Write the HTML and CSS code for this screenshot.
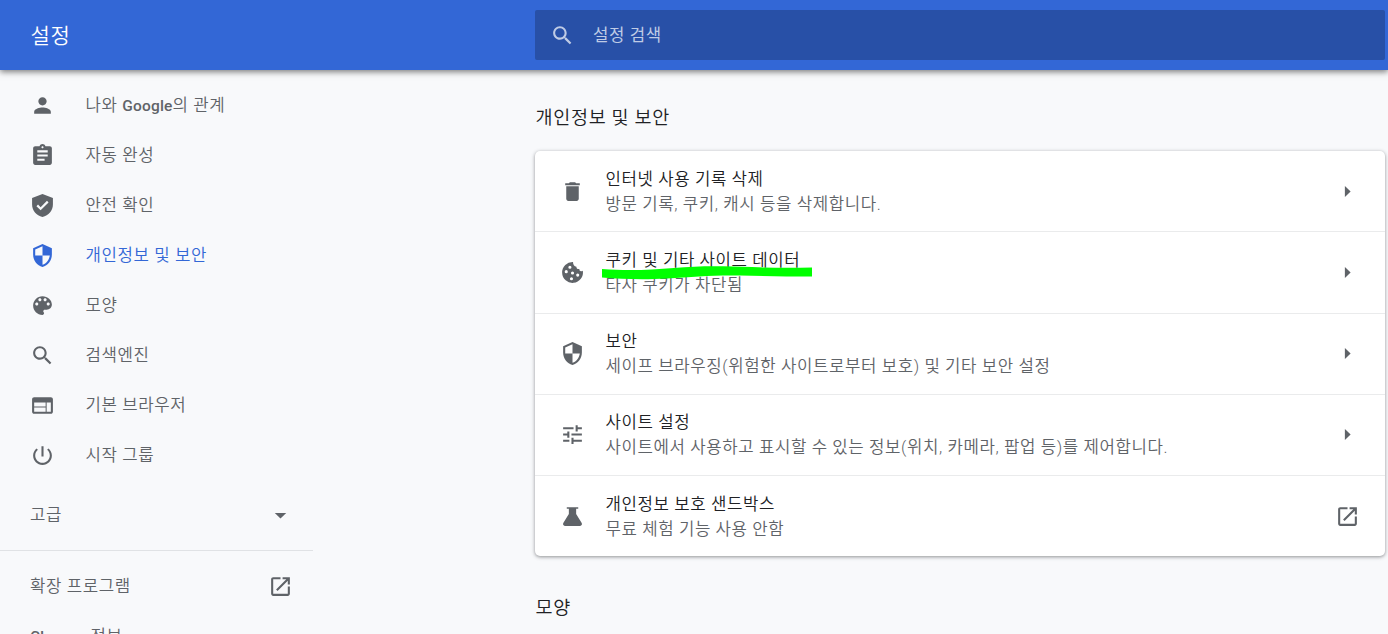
FILE: index.html
```html
<!DOCTYPE html>
<html lang="ko">
<head>
    <meta charset="utf-8">
    <meta name="viewport" content="width=device-width, initial-scale=1">
    <title>설정 - 개인정보 및 보안</title>
    <link rel="stylesheet" href="styles.css">
</head>
<body>
    <header class="toolbar">
        <h1 class="toolbar-title">설정</h1>
        <div class="search">
            <svg class="icon" viewBox="0 0 24 24"><path d="M15.5 14h-.79l-.28-.27C15.41 12.59 16 11.11 16 9.5 16 5.91 13.09 3 9.5 3S3 5.91 3 9.5 5.91 16 9.5 16c1.61 0 3.09-.59 4.23-1.57l.27.28v.79l5 4.99L20.49 19l-4.99-5zm-6 0C7.01 14 5 11.99 5 9.5S7.01 5 9.5 5 14 7.01 14 9.5 11.99 14 9.5 14z"/></svg>
            <span>설정 검색</span>
        </div>
    </header>

    <div class="container">
        <nav class="sidebar">
            <a class="menu-item">
                <svg class="icon" viewBox="0 0 24 24"><path d="M12 12c2.21 0 4-1.79 4-4s-1.79-4-4-4-4 1.79-4 4 1.79 4 4 4zm0 2c-2.67 0-8 1.34-8 4v2h16v-2c0-2.66-5.33-4-8-4z"/></svg>
                <span>나와 <b>Google</b>의 관계</span>
            </a>
            <a class="menu-item">
                <svg class="icon" viewBox="0 0 24 24"><path d="M19 3h-4.18C14.4 1.84 13.3 1 12 1c-1.3 0-2.4.84-2.82 2H5c-1.1 0-2 .9-2 2v14c0 1.1.9 2 2 2h14c1.1 0 2-.9 2-2V5c0-1.1-.9-2-2-2zm-7 0c.55 0 1 .45 1 1s-.45 1-1 1-1-.45-1-1 .45-1 1-1zm2 14H7v-2h7v2zm3-4H7v-2h10v2zm0-4H7V7h10v2z"/></svg>
                <span>자동 완성</span>
            </a>
            <a class="menu-item">
                <svg class="icon" viewBox="0 0 24 24"><path d="M12 1L2 4.8V11c0 5.55 4.1 10.74 10 12 5.9-1.26 10-6.45 10-12V4.8L12 1zm-1.8 15.6l-4-4 1.5-1.5 2.5 2.5 6.1-6.1 1.5 1.5-7.6 7.6z"/></svg>
                <span>안전 확인</span>
            </a>
            <a class="menu-item selected">
                <svg class="icon" viewBox="0 0 24 24"><path d="M12 1L3 5v6c0 5.55 3.84 10.74 9 12 5.16-1.26 9-6.45 9-12V5l-9-4zm0 10.99h7c-.53 4.12-3.28 7.79-7 8.94V12H5V6.3l7-3.11v8.8z"/></svg>
                <span>개인정보 및 보안</span>
            </a>
            <a class="menu-item">
                <svg class="icon" viewBox="0 0 24 24"><path d="M12 3c-4.97 0-9 4.03-9 9s4.03 9 9 9c.83 0 1.5-.67 1.5-1.5 0-.39-.15-.74-.39-1.01-.23-.26-.38-.61-.38-.99 0-.83.67-1.5 1.5-1.5H16c2.76 0 5-2.24 5-5 0-4.42-4.03-8-9-8zm-5.5 9c-.83 0-1.5-.67-1.5-1.5S5.67 9 6.5 9 8 9.67 8 10.5 7.33 12 6.5 12zm3-4C8.67 8 8 7.33 8 6.5S8.67 5 9.5 5s1.5.67 1.5 1.5S10.33 8 9.5 8zm5 0c-.83 0-1.5-.67-1.5-1.5S13.67 5 14.5 5s1.5.67 1.5 1.5S15.33 8 14.5 8zm3 4c-.83 0-1.5-.67-1.5-1.5S16.67 9 17.5 9s1.5.67 1.5 1.5-.67 1.5-1.5 1.5z"/></svg>
                <span>모양</span>
            </a>
            <a class="menu-item">
                <svg class="icon" viewBox="0 0 24 24"><path d="M15.5 14h-.79l-.28-.27C15.41 12.59 16 11.11 16 9.5 16 5.91 13.09 3 9.5 3S3 5.91 3 9.5 5.91 16 9.5 16c1.61 0 3.09-.59 4.23-1.57l.27.28v.79l5 4.99L20.49 19l-4.99-5zm-6 0C7.01 14 5 11.99 5 9.5S7.01 5 9.5 5 14 7.01 14 9.5 11.99 14 9.5 14z"/></svg>
                <span>검색엔진</span>
            </a>
            <a class="menu-item">
                <svg class="icon" viewBox="0 0 24 24"><path d="M20 4H4c-1.1 0-2 .9-2 2v12c0 1.1.9 2 2 2h16c1.1 0 2-.9 2-2V6c0-1.1-.9-2-2-2zm-5 14H4v-4h11v4zm0-5H4V9h11v4zm5 5h-4V9h4v9z"/></svg>
                <span>기본 브라우저</span>
            </a>
            <a class="menu-item">
                <svg class="icon" viewBox="0 0 24 24"><path d="M13 3h-2v10h2V3zm4.83 2.17l-1.42 1.42C17.99 7.86 19 9.81 19 12c0 3.87-3.13 7-7 7s-7-3.13-7-7c0-2.19 1.01-4.14 2.58-5.42L6.17 5.17C4.23 6.82 3 9.26 3 12c0 4.97 4.03 9 9 9s9-4.03 9-9c0-2.74-1.23-5.18-3.17-6.83z"/></svg>
                <span>시작 그룹</span>
            </a>

            <div class="advanced">
                <span>고급</span>
                <svg class="icon" viewBox="0 0 24 24"><path d="M6.5 9.5l5.5 5.5 5.5-5.5z"/></svg>
            </div>

            <div class="menu-footer">
                <a class="menu-link">
                    <span>확장 프로그램</span>
                    <svg class="icon" viewBox="0 0 24 24"><path d="M19 19H5V5h7V3H5c-1.11 0-2 .9-2 2v14c0 1.1.89 2 2 2h14c1.1 0 2-.9 2-2v-7h-2v7zM14 3v2h3.59l-9.83 9.83 1.41 1.41L19 6.41V10h2V3h-7z"/></svg>
                </a>
                <a class="menu-link"><span><b>Chrome</b> 정보</span></a>
            </div>
        </nav>

        <main class="main">
            <h2>개인정보 및 보안</h2>
            <section class="card">
                <div class="row">
                    <svg class="icon" viewBox="0 0 24 24"><path d="M6 19c0 1.1.9 2 2 2h8c1.1 0 2-.9 2-2V7H6v12zM19 4h-3.5l-1-1h-5l-1 1H5v2h14V4z"/></svg>
                    <div class="row-text">
                        <div class="label">인터넷 사용 기록 삭제</div>
                        <div class="sub-label">방문 기록, 쿠키, 캐시 등을 삭제합니다.</div>
                    </div>
                    <svg class="icon" viewBox="0 0 24 24"><path d="M9.5 17.3l5.5-5.3-5.5-5.3z"/></svg>
                </div>
                <div class="row">
                    <svg class="icon" viewBox="0 0 24 24"><path fill-rule="evenodd" d="M12.5 2a10 10 0 1 0 9.4 8.3c-.5.5-1.6.6-2.3.2-.8-.4-1.1-1-1-1.9-1.6.5-3-.6-2.8-2.2-2 .1-3.4-1.9-3.3-4.4zM9.5 5.5a1.5 1.5 0 1 1 0 3 1.5 1.5 0 0 1 0-3zM6 9.7a1.5 1.5 0 1 1 0 3 1.5 1.5 0 0 1 0-3zM12 11a1.5 1.5 0 1 1 0 3 1.5 1.5 0 0 1 0-3zM17 13a1.5 1.5 0 1 1 0 3 1.5 1.5 0 0 1 0-3zM11 16.5a1.5 1.5 0 1 1 0 3 1.5 1.5 0 0 1 0-3z"/></svg>
                    <div class="row-text">
                        <div class="label">쿠키 및 기타 사이트 데이터</div>
                        <div class="sub-label">타사 쿠키가 차단됨</div>
                        <svg class="marker" viewBox="0 0 210 14"><path d="M0 3C25 5 48 4 72 2C98-.5 120 0 150 1C172 2 191 2 210 1.5V10.5C185 10.5 160 10 138 9.5C110 9 91 11 65 12.5C40 14 20 13 0 11.5Z"/></svg>
                    </div>
                    <svg class="icon" viewBox="0 0 24 24"><path d="M9.5 17.3l5.5-5.3-5.5-5.3z"/></svg>
                </div>
                <div class="row">
                    <svg class="icon" viewBox="0 0 24 24"><path d="M12 1L3 5v6c0 5.55 3.84 10.74 9 12 5.16-1.26 9-6.45 9-12V5l-9-4zm0 10.99h7c-.53 4.12-3.28 7.79-7 8.94V12H5V6.3l7-3.11v8.8z"/></svg>
                    <div class="row-text">
                        <div class="label">보안</div>
                        <div class="sub-label">세이프 브라우징(위험한 사이트로부터 보호) 및 기타 보안 설정</div>
                    </div>
                    <svg class="icon" viewBox="0 0 24 24"><path d="M9.5 17.3l5.5-5.3-5.5-5.3z"/></svg>
                </div>
                <div class="row">
                    <svg class="icon" viewBox="0 0 24 24"><path d="M3 17v2h6v-2H3zM3 5v2h10V5H3zm10 16v-2h8v-2h-8v-2h-2v6h2zM7 9v2H3v2h4v2h2V9H7zm14 4v-2H11v2h10zm-6-4h2V7h4V5h-4V3h-2v6z"/></svg>
                    <div class="row-text">
                        <div class="label">사이트 설정</div>
                        <div class="sub-label">사이트에서 사용하고 표시할 수 있는 정보(위치, 카메라, 팝업 등)를 제어합니다.</div>
                    </div>
                    <svg class="icon" viewBox="0 0 24 24"><path d="M9.5 17.3l5.5-5.3-5.5-5.3z"/></svg>
                </div>
                <div class="row">
                    <svg class="icon" viewBox="0 0 24 24"><path d="M6.5 3h11v1.5h-2V9.5L20.7 18c.9 1.5.1 3-1.6 3H4.9c-1.7 0-2.5-1.5-1.6-3L8.5 9.5V4.5h-2z"/></svg>
                    <div class="row-text">
                        <div class="label">개인정보 보호 샌드박스</div>
                        <div class="sub-label">무료 체험 기능 사용 안함</div>
                    </div>
                    <svg class="icon" viewBox="0 0 24 24"><path d="M19 19H5V5h7V3H5c-1.11 0-2 .9-2 2v14c0 1.1.89 2 2 2h14c1.1 0 2-.9 2-2v-7h-2v7zM14 3v2h3.59l-9.83 9.83 1.41 1.41L19 6.41V10h2V3h-7z"/></svg>
                </div>
            </section>
            <h2>모양</h2>
        </main>
    </div>
</body>
</html>
```
FILE: styles.css
```css
* {
    margin: 0;
    padding: 0;
    box-sizing: border-box;
}

body {
    height: 100vh;
    overflow: hidden;
    display: flex;
    flex-direction: column;
    background: #f8f9fb;
    color: #5f6368;
    font-family: Roboto, 'Noto Sans CJK KR', sans-serif;
    font-size: 16.75px;
    font-weight: 350;
    letter-spacing: 0.6px;
    line-height: 25px;
    white-space: nowrap;
}

b {
    font-weight: 500;
    font-size: 15.5px;
    letter-spacing: 0.2px;
}

.icon {
    width: 25px;
    height: 25px;
    flex: none;
    fill: currentColor;
}

.toolbar {
    position: relative;
    flex: none;
    height: 70px;
    display: flex;
    align-items: center;
    background: #3367d6;
    color: white;
    box-shadow: 0 2px 6px rgba(0, 0, 0, 0.5);
}

.toolbar-title {
    width: 535px;
    padding: 3px 0 0 30.5px;
    font-size: 21px;
    font-weight: 350;
}

.search {
    width: 850px;
    height: 50px;
    padding-left: 15px;
    display: flex;
    align-items: center;
    gap: 18px;
    border-radius: 2px;
    background: #2850a7;
    color: #bfcbe5;
    font-weight: 400;
}

.container {
    flex: 1;
    min-height: 0;
    display: flex;
}

.sidebar {
    width: 313px;
    margin-right: 222px;
    padding-top: 10px;
}

.menu-item {
    height: 50px;
    padding-left: 30px;
    display: flex;
    align-items: center;
    gap: 30.5px;
}

.menu-item span,
.advanced span,
.menu-link span {
    padding-top: 1px;
}

.selected {
    color: #3367d6;
}

.advanced,
.menu-link {
    height: 50px;
    padding: 0 20px 0 30px;
    display: flex;
    align-items: center;
    justify-content: space-between;
}

.advanced {
    margin: 10px 0;
}

.menu-footer {
    padding-top: 10px;
    border-top: 1px solid #e0e2e5;
}

.main {
    width: 850px;
    padding-top: 36px;
}

h2 {
    padding-left: 0.5px;
    font-size: 18.5px;
    font-weight: 350;
    letter-spacing: 0.7px;
    color: #202124;
}

.card {
    margin: 20px 0 40px;
    border-radius: 5px;
    background: white;
    box-shadow: 0 1px 3px rgba(60, 64, 67, 0.3), 0 1px 4px rgba(60, 64, 67, 0.3);
}

.row {
    height: 81.2px;
    padding: 0 25px;
    display: flex;
    align-items: center;
    border-top: 1px solid #eaebec;
}

.row:first-child {
    height: 80.4px;
    border-top: none;
}

.row-text {
    position: relative;
    flex: 1;
    padding-top: 1px;
    margin-left: 20.5px;
}

.label {
    color: #202124;
}

/* highlighter stroke over the cookie row */
.marker {
    position: absolute;
    left: -3.5px;
    top: 19px;
    width: 210px;
    height: 14px;
    fill: #00ff00;
}
```
